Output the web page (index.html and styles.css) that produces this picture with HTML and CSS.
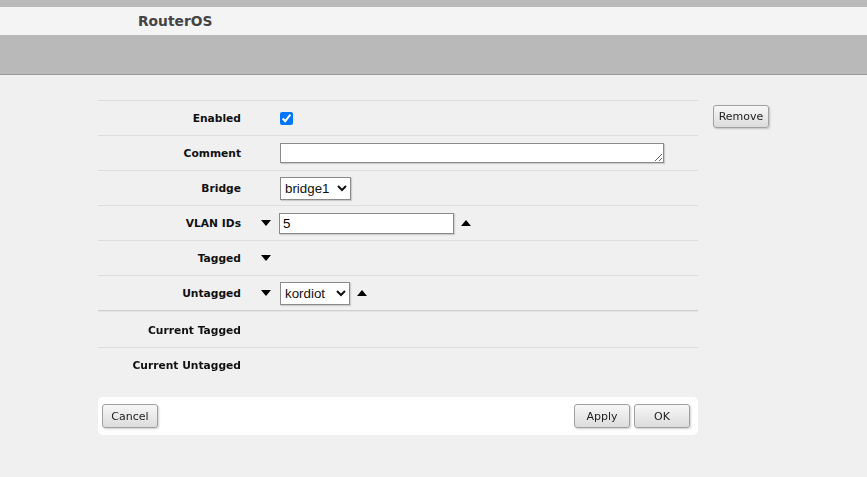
FILE: index.html
```html
<!DOCTYPE html>
<html>
<head>
<title>RouterOS</title>
<link rel="stylesheet" href="styles.css">
</head>
<body>
<div class="topline"></div>
<div class="titlebar"><span class="title">RouterOS</span></div>
<div class="toolbar"></div>
<div class="page">
<div class="form">
<div class="row"><div class="label">Enabled</div><div class="arrow"></div><div class="value"><input type="checkbox" class="check" checked></div></div>
<div class="row"><div class="label">Comment</div><div class="arrow"></div><div class="value"><textarea class="comment" rows="1"></textarea></div></div>
<div class="row"><div class="label">Bridge</div><div class="arrow"></div><div class="value"><select class="select bridge"><option>bridge1</option></select></div></div>
<div class="row"><div class="label">VLAN IDs</div><div class="arrow"><span class="down"></span></div><div class="value"><input type="text" class="text" value="5"><span class="up"></span></div></div>
<div class="row"><div class="label">Tagged</div><div class="arrow"><span class="down"></span></div><div class="value"></div></div>
<div class="row"><div class="label">Untagged</div><div class="arrow"><span class="down"></span></div><div class="value"><select class="select untagged"><option>kordiot</option></select><span class="up"></span></div></div>
<div class="sep"></div>
<div class="row first"><div class="label">Current Tagged</div><div class="arrow"></div><div class="value"></div></div>
<div class="row"><div class="label">Current Untagged</div><div class="arrow"></div><div class="value"></div></div>
<div class="footer">
<button class="btn">Cancel</button>
<div class="right"><button class="btn">Apply</button><button class="btn">OK</button></div>
</div>
</div>
<div class="side"><button class="btn">Remove</button></div>
</div>
</body>
</html>
```

FILE: styles.css
```css
body{margin:0;background:#f0f0f0;font-family:"DejaVu Sans",Verdana,sans-serif;color:#111}
.topline{height:7px;background:#b9b9b9}
.titlebar{height:28px;background:#f4f4f4;display:flex;align-items:center;padding-left:138px}
.title{font-weight:bold;font-size:13.8px;color:#444}
.toolbar{height:39px;background:#b9b9b9;border-bottom:1px solid #9a9a9a}
.page{display:flex;padding:25px 0 0 98px}
.form{width:600px}
.row{display:grid;grid-template-columns:151px 30px 1fr;align-items:center;height:35px;box-sizing:border-box;border-top:1px solid #dedede}
.row.first{border-top:none}
.label{text-align:right;padding-right:8px;font-weight:bold;font-size:10.7px;padding-top:1px}
.arrow{display:flex;align-items:center;padding-left:12px}
.value{display:flex;align-items:center;padding-left:1px}
.down{width:0;height:0;border-left:5px solid transparent;border-right:5px solid transparent;border-top:6px solid #000}
.up{width:0;height:0;border-left:5px solid transparent;border-right:5px solid transparent;border-bottom:6px solid #000;margin-left:7px}
.check{margin:0;width:13px;height:13px}
.comment{margin:0;width:384px;height:20px;box-sizing:border-box;border:1px solid #8a8a8a;box-shadow:1px 1px 1px rgba(0,0,0,.15);font-family:"Liberation Sans",Arial,sans-serif;font-size:13.33px}
.text{margin:0 0 0 -1px;width:175px;height:21px;box-sizing:border-box;border:1px solid #8a8a8a;box-shadow:1px 1px 1px rgba(0,0,0,.15);font-family:"Liberation Sans",Arial,sans-serif;font-size:13.33px;padding:0 3px}
.select{margin:0;height:23px;border:1px solid #8a8a8a;border-radius:0;background:#fff;box-shadow:1px 1px 1px rgba(0,0,0,.15);font-family:"Liberation Sans",Arial,sans-serif;font-size:13.33px;color:#111}
.bridge{width:71px}
.untagged{width:70px}
.sep{height:0;border-top:1px solid #cfcfcf;border-bottom:1px solid #e4e4e4}
.footer{display:flex;justify-content:space-between;align-items:center;background:#fff;border-radius:5px;margin-top:15px;padding:0 8px 0 4px;height:38px}
.right{display:flex;gap:4px}
.btn{width:56px;height:24px;padding:0;background:linear-gradient(#f7f7f7,#dcdcdc);border:1px solid #a0a0a0;border-radius:3px;box-shadow:1px 1px 2px rgba(0,0,0,.2);font-family:"DejaVu Sans",Tahoma,sans-serif;font-size:11px;color:#222}
.side{margin-left:15px;padding-top:5px}
.side .btn{height:23px}
```
